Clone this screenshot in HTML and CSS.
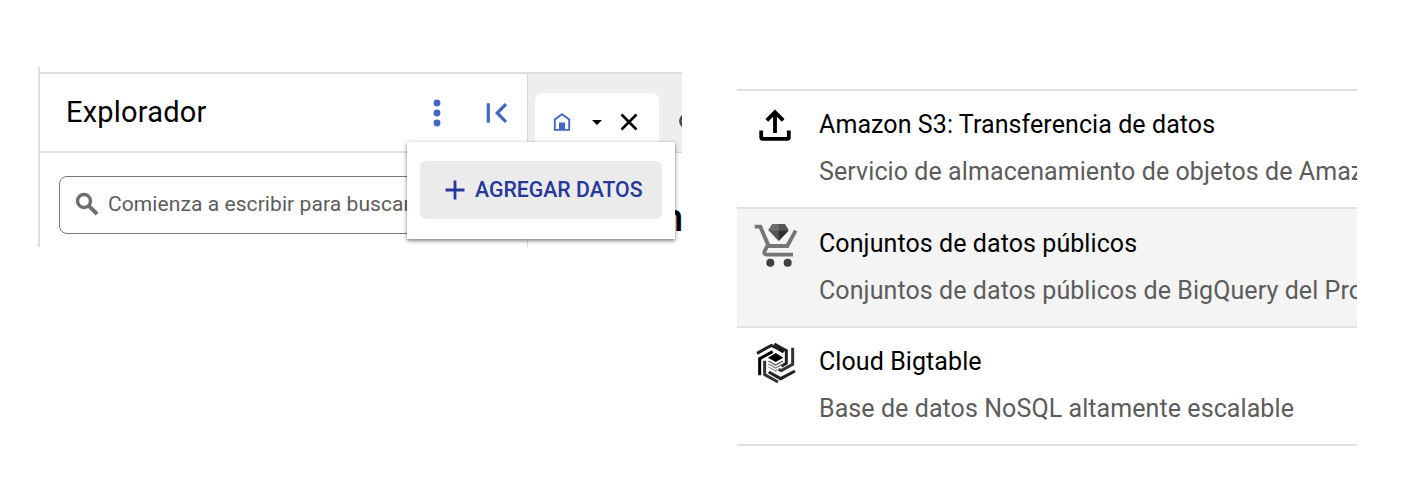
FILE: index.html
```html
<!DOCTYPE html>
<html lang="es">
<head>
<meta charset="utf-8">
<title>Explorador</title>
<link rel="stylesheet" href="styles.css">
</head>
<body>
<main class="page">
  <section class="workspace">
    <div class="explorer">
      <header class="explorer-head">
        <h1 class="explorer-title">Explorador</h1>
        <svg class="dots" viewBox="0 0 8 28" fill="#4169c4"><circle cx="4" cy="4" r="3.4"/><circle cx="4" cy="14" r="3.4"/><circle cx="4" cy="24" r="3.4"/></svg>
        <svg class="collapse" viewBox="0 0 22 22" fill="none" stroke="#4169c4" stroke-width="3.2"><path d="M2.3 1.3v19.4M20 2.2l-8.8 8.8 8.8 8.8"/></svg>
      </header>
      <div class="search">
        <svg class="search-icon" viewBox="0 0 24 24" fill="none" stroke="#6e6e6e" stroke-width="3.4"><circle cx="9" cy="9" r="6.5"/><path d="M13.6 13.6l8.5 8.5" stroke-width="4"/></svg>
        <span class="search-text">Comienza a escribir para buscar</span>
      </div>
    </div>
    <div class="editor">
      <div class="tabs">
        <div class="tab">
          <svg class="home" viewBox="0 0 18 18"><path d="M1.8 16.9V6.6L9 1.3l7.2 5.3v10.3z" fill="none" stroke="#4169c4" stroke-width="1.9"/><path d="M6 9.5h6V17H6z" fill="#4169c4"/></svg>
          <svg class="caret" viewBox="0 0 10 5"><path d="M0 0h10L5 5z"/></svg>
          <svg class="close" viewBox="0 0 18 18" fill="none" stroke="#000" stroke-width="2.6"><path d="M1.5 1.5l15 15M16.5 1.5l-15 15"/></svg>
        </div>
        <svg class="next-tab" viewBox="0 0 16 16" fill="none" stroke="#444" stroke-width="2.6"><circle cx="8" cy="8" r="6.6"/></svg>
      </div>
      <div class="editor-title">n</div>
    </div>
    <div class="popup">
      <button class="add">
        <svg class="plus" viewBox="0 0 20 20" stroke="#26399b" stroke-width="2.8"><path d="M10 .5v19M.5 10h19"/></svg>
        <span class="add-text">AGREGAR DATOS</span>
      </button>
    </div>
  </section>

  <section class="sources">
    <article class="source">
      <div class="source-icon"><svg class="upload" viewBox="0 0 32 32" fill="none" stroke="#000" stroke-width="3.8"><path d="M16 24V3.5M7.8 11.3L16 3.2l8.2 8.1"/><path d="M2.2 21.5v6.7q0 1.6 1.6 1.6h24.4q1.6 0 1.6-1.6v-6.7"/></svg></div>
      <div class="source-copy">
        <h2 class="source-name">Amazon S3: Transferencia de datos</h2>
        <p class="source-desc">Servicio de almacenamiento de objetos de Amaz</p>
      </div>
    </article>
    <article class="source selected">
      <div class="source-icon"><svg class="cart" viewBox="40 70 132 132"><path d="M42 81h17l25 58h56l25-46M80 139l-8 15q-4 11 7 11h78" fill="none" stroke="#757575" stroke-width="11.5"/><circle cx="89" cy="189" r="12" fill="#3f3f3f"/><circle cx="141" cy="189" r="12" fill="#3f3f3f"/><path d="M95 73h38l11 18-30 33-31-33z" fill="#555"/><path d="M95 73h19v20H83z" fill="#6d6d6d"/><path d="M114 93h30l-30 31z" fill="#303030"/></svg></div>
      <div class="source-copy">
        <h2 class="source-name">Conjuntos de datos públicos</h2>
        <p class="source-desc">Conjuntos de datos públicos de BigQuery del Pro</p>
      </div>
    </article>
    <article class="source">
      <div class="source-icon"><svg class="bigtable" viewBox="46 36 120 126" fill="none" stroke-width="9"><path d="M49 70l43-24 20 10" stroke="#222"/><path d="M101 42l36 20v38l-15 9" stroke="#222"/><path d="M156 53v50l-34 19-8-4" stroke="#333"/><path d="M163 123l-43 23-36-20" stroke="#222"/><path d="M112 156l-40-22V92" stroke="#333"/><path d="M57 136V86l39-21" stroke="#000"/><path d="M112 56l17 10" stroke="#111"/><path d="M82 83l23-14 23 14-23 13z" fill="#000"/><path d="M83 93l22 12 22-12" stroke="#555" stroke-width="4"/><path d="M83 102l22 12 22-12" stroke="#777" stroke-width="4"/><path d="M83 111l22 12 10-6" stroke="#999" stroke-width="4"/></svg></div>
      <div class="source-copy">
        <h2 class="source-name">Cloud Bigtable</h2>
        <p class="source-desc">Base de datos NoSQL altamente escalable</p>
      </div>
    </article>
  </section>
</main>
</body>
</html>
```
FILE: styles.css
```css
* { box-sizing: border-box; margin: 0; }
body { background: #fff; color: #000; font-family: Roboto, "Liberation Sans", sans-serif; }
svg { display: block; flex: none; }
.page { display: flex; align-items: flex-start; width: 1426px; height: 502px; padding: 67px 69px 0 38px; overflow: hidden; }
.workspace { position: relative; display: flex; width: 644px; height: 180px; padding-top: 5px; overflow: hidden; border-left: 2px solid #dedede; }
.explorer { width: 488px; flex: none; border-top: 2px solid #e0e0e0; border-right: 1px solid #d8d8d8; }
.explorer-head { display: flex; align-items: center; height: 79px; padding: 0 19px 0 26px; border-bottom: 2px solid #e0e0e0; }
.explorer-title { flex: 1; padding-bottom: 1px; font-size: 29px; font-weight: 400; line-height: 34px; letter-spacing: .2px; }
.dots { width: 8px; height: 28px; margin-right: 45px; }
.collapse { width: 22px; height: 22px; }
.search { display: flex; align-items: center; width: 440px; height: 58px; margin: 23px 0 0 19px; padding: 0 0 2px 15px; border: 1.5px solid #777; border-radius: 8px; }
.search-icon { width: 24px; height: 24px; margin: 0 9px 1px 0; }
.search-text { font-size: 21px; color: #5c5c5c; letter-spacing: .08px; white-space: nowrap; }
.editor { flex: 1; border-top: 2px solid #e0e0e0; overflow: hidden; }
.tabs { display: flex; height: 79px; padding: 19px 0 0 7px; background: #eee; border-bottom: 1px solid #d8d8d8; overflow: hidden; }
.tab { display: flex; flex: none; align-items: center; width: 124px; height: 60px; padding: 0 0 2px 18px; background: #fff; border-radius: 8px 8px 0 0; }
.home { width: 18px; height: 18px; margin-right: 21px; }
.caret { width: 10px; height: 5px; margin-right: 18px; }
.close { width: 18px; height: 18px; }
.next-tab { width: 16px; height: 16px; margin: 20px 0 0 20px; }
.editor-title { padding: 46px 0 0; margin-left: 134px; font-size: 38px; line-height: 38px; font-weight: 500; }
.popup { position: absolute; left: 367px; top: 75px; width: 268px; height: 97px; padding: 19px 13px; background: #fff; box-shadow: 0 2px 4px rgba(0,0,0,.45), 0 0 3px rgba(0,0,0,.12); }
.add { display: flex; align-items: center; width: 242px; height: 58px; padding: 0 0 0 25px; border: 0; border-radius: 6px; background: #ebebeb; font-family: inherit; }
.plus { width: 20px; height: 20px; margin-right: 10px; }
.add-text { padding-bottom: 1px; font-size: 21.25px; font-weight: 500; color: #26399b; white-space: nowrap; }
.sources { width: 620px; margin: 22px 0 0 55px; border-bottom: 2px solid #e0e0e0; }
.source { display: flex; height: 118.3px; border-top: 2px solid #e0e0e0; overflow: hidden; }
.selected { background: #f4f4f4; }
.source-icon { flex: none; width: 82px; padding: 15px 0 0 17px; }
.upload { width: 32px; height: 32px; margin: 3px 0 0 5px; }
.cart { width: 44px; height: 44px; margin-top: -1px; }
.bigtable { width: 40px; height: 42px; margin: -1px 0 0 2px; }
.source-copy { flex: 1; min-width: 0; padding-top: 19.4px; overflow: hidden; }
.source-name, .source-desc { font-size: 25px; line-height: 30px; font-weight: 400; letter-spacing: .08px; white-space: nowrap; }
.source-desc { margin-top: 17px; color: #5c5c5c; }
```
